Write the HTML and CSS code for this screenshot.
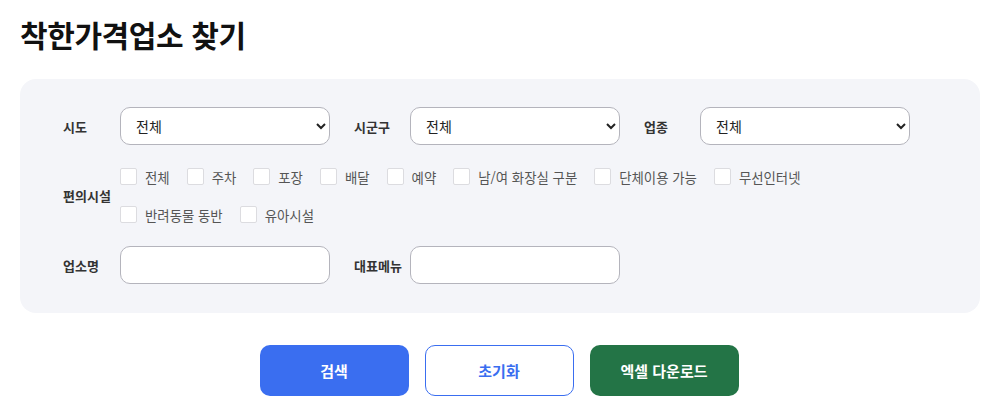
FILE: index.html
```html
<!DOCTYPE html>
<html lang="ko">
<head>
<meta charset="utf-8">
<title>착한가격업소 찾기</title>
<link rel="stylesheet" href="styles.css">
</head>
<body>
<div class="page">
  <h1 class="title">착한가격업소 찾기</h1>
  <div class="panel">
    <div class="row">
      <label class="lbl">시도</label>
      <select class="sel"><option>전체</option></select>
      <label class="lbl lbl-gap">시군구</label>
      <select class="sel"><option>전체</option></select>
      <label class="lbl lbl-gap">업종</label>
      <select class="sel"><option>전체</option></select>
    </div>
    <div class="row">
      <span class="lbl">편의시설</span>
      <div class="checks">
        <label class="chk"><span class="box"></span>전체</label>
        <label class="chk"><span class="box"></span>주차</label>
        <label class="chk"><span class="box"></span>포장</label>
        <label class="chk"><span class="box"></span>배달</label>
        <label class="chk"><span class="box"></span>예약</label>
        <label class="chk"><span class="box"></span>남/여 화장실 구분</label>
        <label class="chk"><span class="box"></span>단체이용 가능</label>
        <label class="chk"><span class="box"></span>무선인터넷</label>
        <label class="chk"><span class="box"></span>반려동물 동반</label>
        <label class="chk"><span class="box"></span>유아시설</label>
      </div>
    </div>
    <div class="row">
      <label class="lbl">업소명</label>
      <input class="inp" type="text">
      <label class="lbl lbl-gap">대표메뉴</label>
      <input class="inp" type="text">
    </div>
  </div>
  <div class="actions">
    <button class="btn btn-blue">검색</button>
    <button class="btn btn-line">초기화</button>
    <button class="btn btn-green">엑셀 다운로드</button>
  </div>
</div>
</body>
</html>
```
FILE: styles.css
```css
* { box-sizing: border-box; }
body {
  margin: 0;
  background: #fff;
  font-family: "Noto Sans CJK KR", "Noto Sans", sans-serif;
  color: #222;
}
.page { padding: 0 16px 0 20px; }
.title {
  margin: 0;
  padding-top: 14px;
  font-size: 30px;
  line-height: 40px;
  font-weight: 700;
  color: #111;
  letter-spacing: -0.4px;
}
.panel {
  margin-top: 25px;
  background: #f4f5f9;
  border-radius: 16px;
  padding: 28px 43px 29px;
  display: flex;
  flex-direction: column;
  gap: 23px;
}
.row {
  display: flex;
  align-items: center;
}
.lbl {
  width: 57px;
  flex: none;
  font-size: 13px;
  font-weight: 700;
  color: #333;
}
.lbl-gap { margin-left: 24px; width: 56px; }
.sel {
  width: 210px;
  height: 38px;
  border: 1px solid #b4b4bc;
  border-radius: 10px;
  background: #fff;
  padding: 0 6px 0 11px;
  font-family: inherit;
  font-size: 14px;
  color: #222;
}
.inp {
  width: 210px;
  height: 38px;
  border: 1px solid #b4b4bc;
  border-radius: 10px;
  background: #fff;
}
.checks {
  max-width: 770px;
  display: flex;
  flex-wrap: wrap;
  column-gap: 17px;
  row-gap: 21px;
}
.chk {
  display: flex;
  align-items: center;
  height: 17px;
  font-size: 13.4px;
  color: #555;
}
.box {
  width: 17px;
  height: 17px;
  background: #fff;
  border: 1px solid #dcdce0;
  border-radius: 2px;
  margin-right: 8px;
}
.actions {
  display: flex;
  justify-content: center;
  gap: 16px;
  margin-top: 32px;
  padding-right: 2px;
}
.btn {
  width: 149px;
  height: 51px;
  border-radius: 10px;
  font-family: inherit;
  font-size: 15px;
  font-weight: 700;
  border: 1px solid transparent;
}
.btn-blue { background: #3a6ef0; color: #fff; }
.btn-line { background: #fff; color: #3a6ef0; border-color: #3a6ef0; }
.btn-green { background: #237446; color: #fff; }
```
